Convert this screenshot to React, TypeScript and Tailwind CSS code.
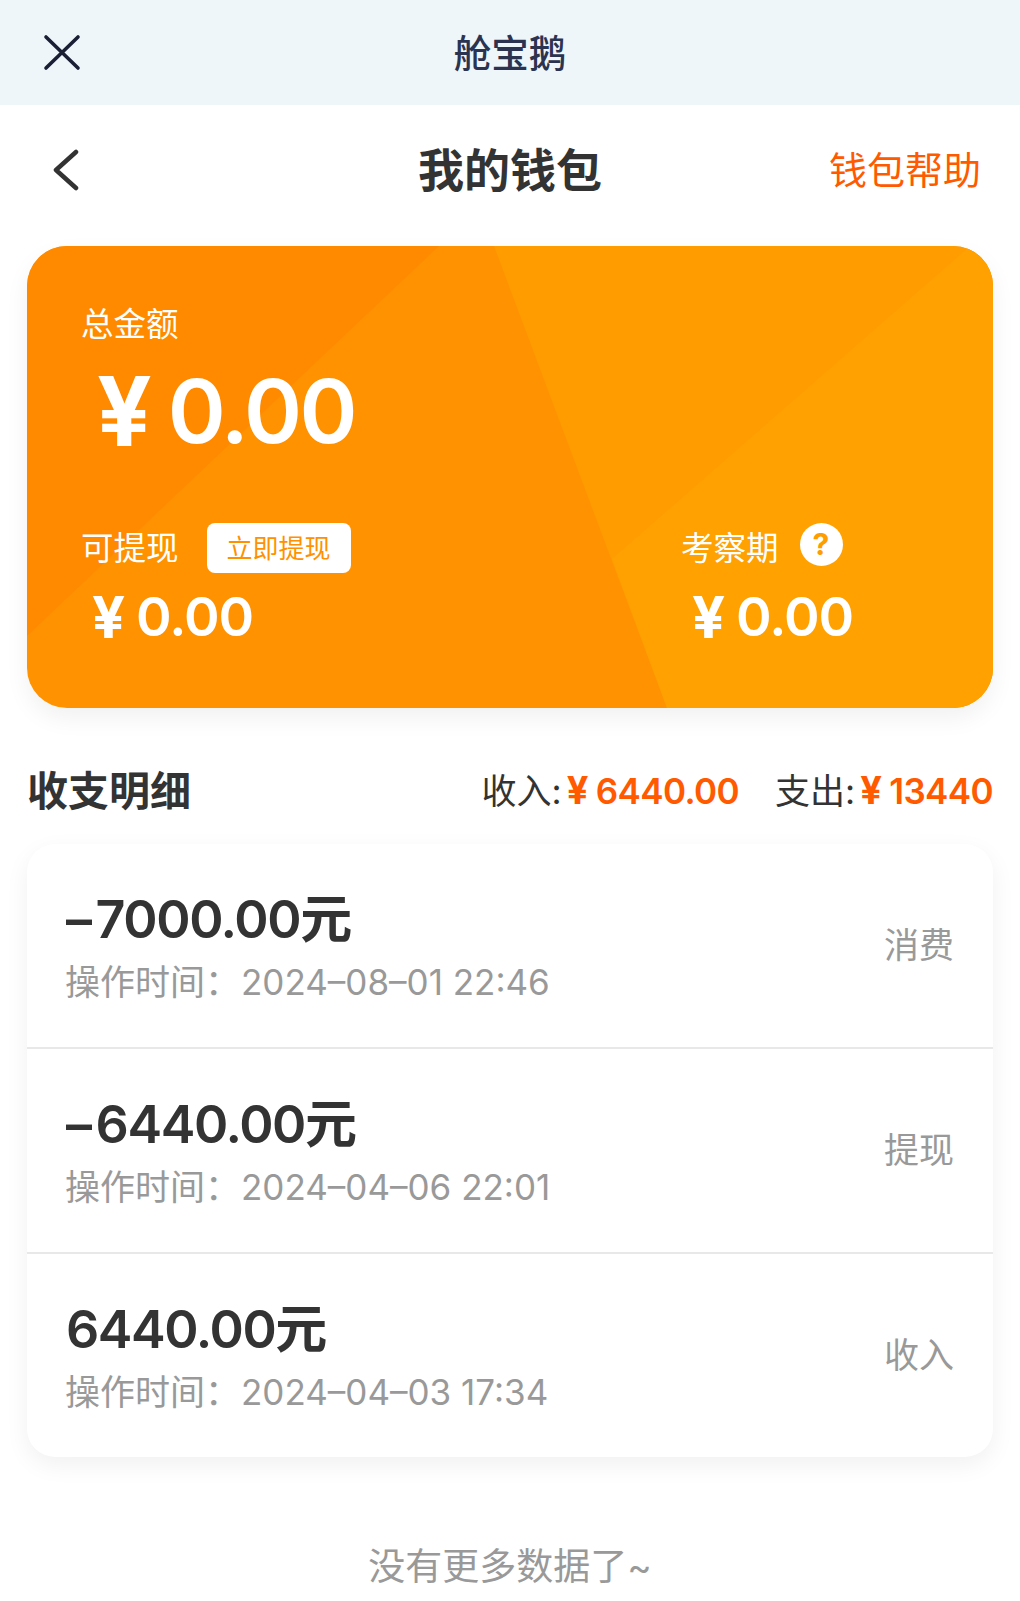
const cjk = "font-['Inter','Noto_Sans_CJK_SC',sans-serif]";

const records = [
  { sign: "–", amount: "7000.00", time: "2024–08–01 22:46", type: "消费" },
  { sign: "–", amount: "6440.00", time: "2024–04–06 22:01", type: "提现" },
  { sign: "", amount: "6440.00", time: "2024–04–03 17:34", type: "收入" },
];

function Money({ value, size }: { value: string; size: "lg" | "sm" }) {
  if (size === "lg") {
    return (
      <div className="flex items-center text-[88px] leading-[100px] font-semibold text-white">
        <span className="mr-[16px] text-[96px] font-bold">¥</span>
        <span className="tracking-[-2.5px]">{value}</span>
      </div>
    );
  }
  return (
    <div className="flex items-center text-[54px] leading-[64px] font-semibold text-white">
      <span className="mr-[11px] text-[58px] font-bold">¥</span>
      <span className="tracking-[-1px]">{value}</span>
    </div>
  );
}

function CardBackground() {
  return (
    <svg className="absolute inset-0 h-full w-full" viewBox="0 0 966 462" preserveAspectRatio="none">
      <rect width="966" height="462" fill="#ff9200" />
      <polygon points="0,0 412,0 0,390" fill="#ff8a00" />
      <polygon points="467,0 966,0 966,462 640,462" fill="#ff9c00" />
      <polygon points="966,-20 966,462 640,462 585,313" fill="#ffa100" />
    </svg>
  );
}

function WalletCard() {
  return (
    <div className="relative mx-[27px] mt-[5px] h-[462px] overflow-hidden rounded-[40px] shadow-[0_10px_24px_rgba(0,0,0,0.06)]">
      <CardBackground />
      <div className="relative flex h-full flex-col px-[54px] pt-[58px]">
        <div className="text-[32.5px] leading-[42px] text-white">总金额</div>
        <div className="mt-[15px] ml-[16px]">
          <Money value="0.00" size="lg" />
        </div>
        <div className="mt-[63px] flex">
          <div className="w-[600px]">
            <div className="flex h-[50px] items-center">
              <span className="text-[32.5px] text-white">可提现</span>
              <span className="ml-[28px] flex h-[50px] w-[144px] -translate-y-[1px] items-center justify-center rounded-[8px] bg-white text-[26px] text-[#ff9100]">
                立即提现
              </span>
            </div>
            <div className="mt-[11px] ml-[11px]">
              <Money value="0.00" size="sm" />
            </div>
          </div>
          <div>
            <div className="flex h-[50px] items-center">
              <span className="text-[32.5px] text-white">考察期</span>
              <span className="ml-[21px] flex h-[43px] w-[43px] -translate-y-[5px] items-center justify-center rounded-full bg-white text-[30px] font-bold text-[#ff9c00]">
                ?
              </span>
            </div>
            <div className="mt-[11px] ml-[11px]">
              <Money value="0.00" size="sm" />
            </div>
          </div>
        </div>
      </div>
    </div>
  );
}

function Summary() {
  return (
    <div className="mx-[27px] mt-[58px] flex items-center justify-between">
      <div className="text-[41px] leading-[48px] font-bold text-[#333]">收支明细</div>
      <div className="flex items-center text-[35px] leading-[48px] text-[#333]">
        <span>收入:</span>
        <span className="ml-[5px] font-semibold tracking-[-0.6px] text-[#ff5a00]">
          <span className="mr-[8px] text-[38px] font-bold">¥</span>6440.00
        </span>
        <span className="ml-[36px]">支出:</span>
        <span className="ml-[5px] font-semibold tracking-[-0.6px] text-[#ff5a00]">
          <span className="mr-[8px] text-[38px] font-bold">¥</span>13440
        </span>
      </div>
    </div>
  );
}

type RowProps = { sign: string; amount: string; time: string; type: string; last: boolean };

function RecordRow({ sign, amount, time, type, last }: RowProps) {
  return (
    <div className={`flex items-center justify-between px-[39px] ${last ? "h-[203px]" : "h-[205px] border-b-2 border-[#e8e8e8]"}`}>
      <div className="mt-[2px]">
        <div className="text-[52px] leading-[64px] font-semibold tracking-[-1.4px] text-[#333]">
          {sign && <span className="mr-[5px]">{sign}</span>}
          {amount}元
        </div>
        <div className="mt-[7px] -ml-[1px] flex text-[35px] leading-[46px] text-[#999]">
          <span className="w-[176px]">操作时间：</span>
          <span>{time}</span>
        </div>
      </div>
      <div className="text-[35px] text-[#999]">{type}</div>
    </div>
  );
}

export default function App() {
  return (
    <div className={`h-[1601px] w-[1020px] overflow-hidden bg-white ${cjk}`}>
      <div className="relative flex h-[105px] items-center justify-center bg-[#eff6f9]">
        <svg className="absolute top-[34px] left-[43px] h-[37px] w-[38px]" viewBox="0 0 38 37" fill="none" stroke="#1a1f36" strokeWidth="3.6" strokeLinecap="round">
          <path d="M3 3L35 34M35 3L3 34" />
        </svg>
        <span className="translate-y-[2px] text-[37.5px] font-medium text-[#2b3350]">舱宝鹅</span>
      </div>

      <div className="relative flex h-[136px] items-center justify-center">
        <svg className="absolute top-[44px] left-[51px] h-[42px] w-[28px]" viewBox="0 0 28 42" fill="none" stroke="#333" strokeWidth="4.5" strokeLinecap="round" strokeLinejoin="round">
          <path d="M25 3L5 21L25 39" />
        </svg>
        <span className="-translate-y-[3px] text-[46px] font-bold text-[#333]">我的钱包</span>
        <span className="absolute top-[41px] right-[39px] text-[38px] leading-[48px] text-[#ff5a00]">钱包帮助</span>
      </div>

      <WalletCard />
      <Summary />

      <div className="mx-[27px] mt-[29px] overflow-hidden rounded-[28px] bg-white shadow-[0_8px_24px_rgba(0,0,0,0.06)]">
        {records.map((r, i) => (
          <RecordRow key={i} sign={r.sign} amount={r.amount} time={r.time} type={r.type} last={i === records.length - 1} />
        ))}
      </div>

      <div className="mt-[86px] text-center text-[37px] leading-[48px] text-[#999]">没有更多数据了~</div>
    </div>
  );
}
